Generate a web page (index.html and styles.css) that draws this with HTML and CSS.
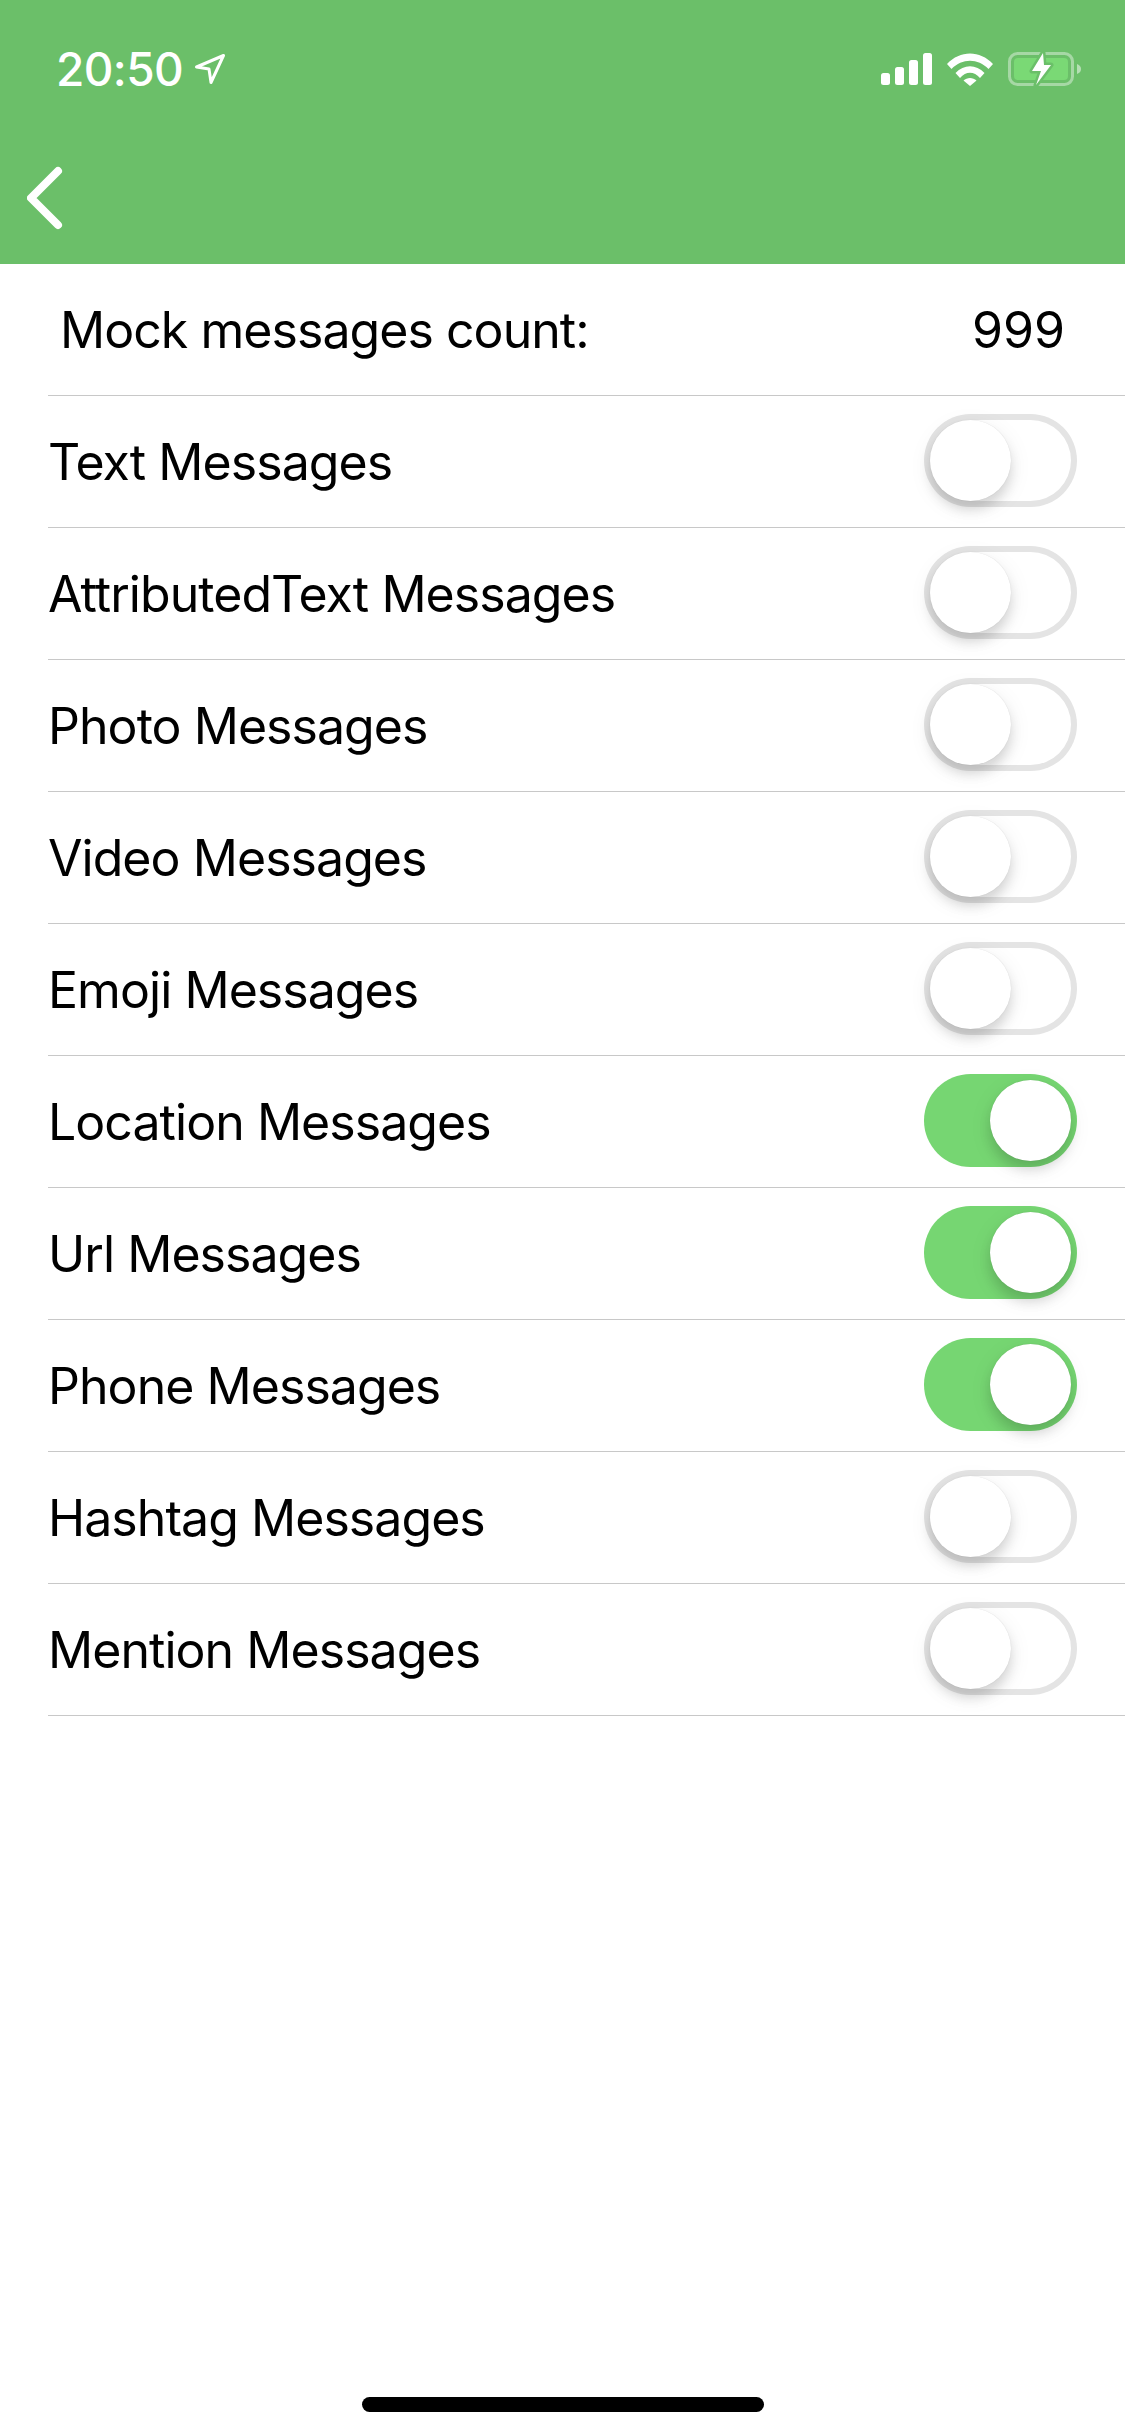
FILE: index.html
```html
<!DOCTYPE html>
<html>
  <head>
    <meta charset="utf-8">
    <meta name="viewport" content="width=device-width, initial-scale=1.0">
    <title>Settings</title>
    <link rel="stylesheet" href="styles.css">
  </head>
  <body>
    <header class="header">
      <div class="status">
        <div class="status_left">
          <span class="time">20:50</span>
          <svg class="arrow" width="30" height="30" viewBox="0 0 30 30">
            <path d="M1.500 13 L28.500 1.500 L16 28.500 L14 15 Z" fill="none" stroke="#fff" stroke-width="3" stroke-linejoin="round"/>
          </svg>
        </div>
        <div class="status_right">
          <svg class="signal" width="51" height="32" viewBox="0 0 51 32">
            <rect x="0" y="20" width="9" height="12" rx="2.5" fill="#fff"/>
            <rect x="14" y="14" width="9" height="18" rx="2.5" fill="#fff"/>
            <rect x="28" y="7" width="9" height="25" rx="2.5" fill="#fff"/>
            <rect x="42" y="0" width="9" height="32" rx="2.5" fill="#fff"/>
          </svg>
          <svg class="wifi" width="46" height="33" viewBox="0 0 46 33">
            <path d="M0 11 C13 -3 33 -3 46 11 L41.500 16 C31 5 15 5 4.500 16 Z" fill="#fff"/>
            <path d="M8.500 20 C17 11 29 11 37.500 20 L33 25 C27 18 19 18 13 25 Z" fill="#fff"/>
            <path d="M16.500 27.500 C20 24 26 24 29.500 27.500 L23 33 Z" fill="#fff"/>
          </svg>
          <svg class="battery" width="74" height="34" viewBox="0 0 74 34">
            <rect x="1.500" y="1.500" width="63" height="31" rx="8" fill="none" stroke="#fff" stroke-opacity=".4" stroke-width="3"/>
            <rect x="6" y="6" width="54" height="22" rx="4" fill="#7ad975"/>
            <path d="M69 12 C72 13 73 15 73 17 C73 19 72 21 69 22 Z" fill="#fff" fill-opacity=".5"/>
            <path d="M35 1 L24 19 L33 19 L28 33 L43 13 L36 13 Z" fill="#fff" stroke="#6bbf69" stroke-width="5" stroke-linejoin="round" paint-order="stroke"/>
          </svg>
        </div>
      </div>
      <nav class="navbar">
        <svg class="back" width="36" height="64" viewBox="0 0 36 64">
          <path d="M31 5 L4 32 L31 59" fill="none" stroke="#fff" stroke-width="8" stroke-linecap="round" stroke-linejoin="round"/>
        </svg>
      </nav>
    </header>
    <main class="list">
      <div class="row row_count">
        <span>Mock messages count:</span>
        <span class="count">999</span>
      </div>
      <div class="row"><span>Text Messages</span><div class="switch"><div class="thumb"></div></div></div>
      <div class="row"><span>AttributedText Messages</span><div class="switch"><div class="thumb"></div></div></div>
      <div class="row"><span>Photo Messages</span><div class="switch"><div class="thumb"></div></div></div>
      <div class="row"><span>Video Messages</span><div class="switch"><div class="thumb"></div></div></div>
      <div class="row"><span>Emoji Messages</span><div class="switch"><div class="thumb"></div></div></div>
      <div class="row"><span>Location Messages</span><div class="switch on"><div class="thumb"></div></div></div>
      <div class="row"><span>Url Messages</span><div class="switch on"><div class="thumb"></div></div></div>
      <div class="row"><span>Phone Messages</span><div class="switch on"><div class="thumb"></div></div></div>
      <div class="row"><span>Hashtag Messages</span><div class="switch"><div class="thumb"></div></div></div>
      <div class="row"><span>Mention Messages</span><div class="switch"><div class="thumb"></div></div></div>
    </main>
    <div class="home"></div>
  </body>
</html>
```

FILE: styles.css
```css
html, body {
  height: 100%;
}
body {
  background:     #fff;
  color:          #000;
  display:        flex;
  flex-direction: column;
  font-family:    Inter, "Liberation Sans", sans-serif;
  margin:         0;
  overflow:       hidden;
}
.header {
  background: #6bbf69;
  height:     264px;
}
.status {
  align-items:     flex-start;
  box-sizing:      border-box;
  display:         flex;
  height:          132px;
  justify-content: space-between;
  padding:         52px 43px 0 56px;
}
.status_left {
  align-items: center;
  color:       #fff;
  display:     flex;
  gap:         12px;
}
.time {
  font-size:      46px;
  font-weight:    500;
  letter-spacing: -0.6px;
  line-height:    34px;
}
.status_right {
  align-items: center;
  display:     flex;
  gap:         15px;
}
.navbar {
  align-items: center;
  display:     flex;
  height:      132px;
  padding:     0 0 0 27px;
}
.back {
  display: block;
}
.list {
  flex: 1;
}
.row {
  align-items:     center;
  border-bottom:   1px solid #c8c8c8;
  box-sizing:      border-box;
  display:         flex;
  font-size:       50px;
  height:          132px;
  justify-content: space-between;
  letter-spacing:  -0.95px;
  margin-left:     48px;
  padding:         0 48px 0 0;
}
.row_count {
  padding: 0 60px 0 12px;
}
.count {
  letter-spacing: 0;
}
.switch {
  border-radius:   47px;
  box-shadow:      inset 0 0 0 6px #e4e4e4;
  box-sizing:      border-box;
  display:         flex;
  height:          93px;
  justify-content: flex-start;
  margin-bottom:   2px;
  padding:         6px;
  width:           153px;
}
.switch.on {
  background:      #76d672;
  box-shadow:      none;
  justify-content: flex-end;
}
.thumb {
  background:    #fff;
  border-radius: 50%;
  box-shadow:    0 9px 12px rgba(0, 0, 0, 0.13), 0 6px 24px rgba(0, 0, 0, 0.07), 0 0 1px rgba(0, 0, 0, 0.15);
  height:        81px;
  width:         81px;
}
.home {
  align-self:    center;
  background:    #000;
  border-radius: 8px;
  height:        15px;
  margin-bottom: 24px;
  width:         402px;
}
```
